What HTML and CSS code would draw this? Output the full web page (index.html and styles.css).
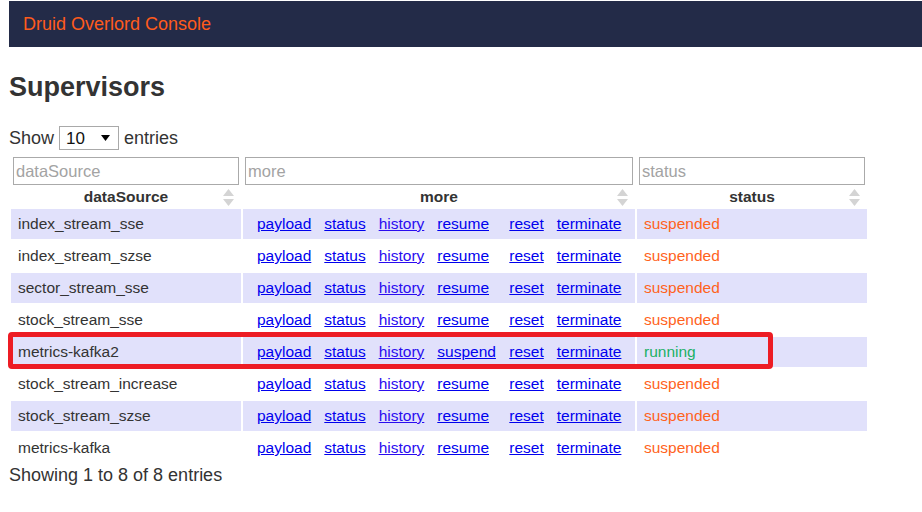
FILE: index.html
```html
<!DOCTYPE html>
<html lang="en">
<head>
<meta charset="utf-8">
<title>Druid Overlord Console</title>
<link rel="stylesheet" href="styles.css">
</head>
<body>
<header class="topbar"><span class="brand">Druid Overlord Console</span></header>
<main class="content">
  <h2 class="page-title">Supervisors</h2>
  <div class="length">
    <span>Show</span>
    <span class="fake-select"><span class="sel-value">10</span><svg class="sel-arrow" width="9" height="6" viewBox="0 0 9 6"><polygon points="0,0 9,0 4.5,6" fill="#000"/></svg></span>
    <span>entries</span>
  </div>
  <div class="table-wrap">
    <table class="grid">
      <colgroup><col class="c1"><col class="c2"><col class="c3"></colgroup>
      <thead>
        <tr class="filters">
          <td><input type="text" placeholder="dataSource"></td>
          <td><input type="text" placeholder="more"></td>
          <td><input type="text" placeholder="status"></td>
        </tr>
        <tr class="heads">
          <th>dataSource<svg class="sort" width="11" height="18" viewBox="0 0 11 18"><polygon points="5.5,0 11,7 0,7" fill="#d4d4d4"/><polygon points="0,10 11,10 5.5,17" fill="#d4d4d4"/></svg></th>
          <th>more<svg class="sort" width="11" height="18" viewBox="0 0 11 18"><polygon points="5.5,0 11,7 0,7" fill="#d4d4d4"/><polygon points="0,10 11,10 5.5,17" fill="#d4d4d4"/></svg></th>
          <th>status<svg class="sort" width="11" height="18" viewBox="0 0 11 18"><polygon points="5.5,0 11,7 0,7" fill="#d4d4d4"/><polygon points="0,10 11,10 5.5,17" fill="#d4d4d4"/></svg></th>
        </tr>
      </thead>
      <tbody>
        <tr class="odd"><td class="ds">index_stream_sse</td><td class="acts"><div class="links"><a href="#">payload</a><a href="#">status</a><a href="#" class="hist">history</a><a href="#" class="slot">resume</a><a href="#">reset</a><a href="#">terminate</a></div></td><td class="st susp">suspended</td></tr>
        <tr><td class="ds">index_stream_szse</td><td class="acts"><div class="links"><a href="#">payload</a><a href="#">status</a><a href="#" class="hist">history</a><a href="#" class="slot">resume</a><a href="#">reset</a><a href="#">terminate</a></div></td><td class="st susp">suspended</td></tr>
        <tr class="odd"><td class="ds">sector_stream_sse</td><td class="acts"><div class="links"><a href="#">payload</a><a href="#">status</a><a href="#" class="hist">history</a><a href="#" class="slot">resume</a><a href="#">reset</a><a href="#">terminate</a></div></td><td class="st susp">suspended</td></tr>
        <tr><td class="ds">stock_stream_sse</td><td class="acts"><div class="links"><a href="#">payload</a><a href="#">status</a><a href="#" class="hist">history</a><a href="#" class="slot">resume</a><a href="#">reset</a><a href="#">terminate</a></div></td><td class="st susp">suspended</td></tr>
        <tr class="odd"><td class="ds">metrics-kafka2</td><td class="acts"><div class="links"><a href="#">payload</a><a href="#">status</a><a href="#" class="hist">history</a><a href="#" class="slot">suspend</a><a href="#">reset</a><a href="#">terminate</a></div></td><td class="st run">running</td></tr>
        <tr><td class="ds">stock_stream_increase</td><td class="acts"><div class="links"><a href="#">payload</a><a href="#">status</a><a href="#" class="hist">history</a><a href="#" class="slot">resume</a><a href="#">reset</a><a href="#">terminate</a></div></td><td class="st susp">suspended</td></tr>
        <tr class="odd"><td class="ds">stock_stream_szse</td><td class="acts"><div class="links"><a href="#">payload</a><a href="#">status</a><a href="#" class="hist">history</a><a href="#" class="slot">resume</a><a href="#">reset</a><a href="#">terminate</a></div></td><td class="st susp">suspended</td></tr>
        <tr><td class="ds">metrics-kafka</td><td class="acts"><div class="links"><a href="#">payload</a><a href="#">status</a><a href="#" class="hist">history</a><a href="#" class="slot">resume</a><a href="#">reset</a><a href="#">terminate</a></div></td><td class="st susp">suspended</td></tr>
      </tbody>
    </table>
    <div class="highlight"></div>
  </div>
  <div class="info">Showing 1 to 8 of 8 entries</div>
</main>
</body>
</html>
```
FILE: styles.css
```css
html, body {
  margin: 0;
  padding: 0;
  background: #fff;
}
body {
  font-family: "Liberation Sans", Arial, sans-serif;
  color: #333;
  padding-top: 1px;
}
.topbar {
  margin-left: 9px;
  height: 46px;
  background: #232b48;
  display: flex;
  align-items: center;
  padding-left: 14px;
}
.brand {
  color: #ff5b1c;
  font-size: 18px;
  line-height: 21px;
}
.content {
  padding-left: 9px;
}
.page-title {
  margin: 25px 0 0;
  font-size: 27px;
  line-height: 31px;
  font-weight: bold;
  color: #333;
}
.length {
  margin-top: 23px;
  height: 24px;
  display: flex;
  align-items: center;
  gap: 5px;
  font-size: 18px;
  line-height: 21px;
  color: #333;
}
.fake-select {
  box-sizing: border-box;
  width: 60px;
  height: 24px;
  border: 1px solid #a9a9a9;
  display: flex;
  align-items: center;
  padding-left: 6px;
  font-size: 17px;
  color: #111;
}
.sel-value {
  flex: 1;
}
.sel-arrow {
  margin-right: 8px;
}
.table-wrap {
  position: relative;
  margin-top: 3px;
  width: 860px;
}
.grid {
  table-layout: fixed;
  width: 860px;
  border-collapse: separate;
  border-spacing: 2px;
  font-size: 15.5px;
}
.c1 { width: 230px; }
.c2 { width: 392px; }
.c3 { width: 230px; }
.grid td, .grid th {
  padding: 0;
}
.filters td {
  padding: 2px 2px 0;
  height: 28px;
}
.filters input {
  box-sizing: border-box;
  width: 100%;
  height: 28px;
  margin: 0;
  border: 1px solid #aaa;
  padding: 0 2px;
  font-family: "Liberation Sans", Arial, sans-serif;
  font-size: 16.5px;
  color: #333;
  outline: none;
}
.filters input::placeholder {
  color: #a3a3a3;
}
.heads th {
  position: relative;
  height: 20px;
  line-height: 18px;
  font-weight: bold;
  color: #333;
  text-align: center;
}
.sort {
  position: absolute;
  right: 7px;
  top: 2px;
}
tbody td {
  height: 30px;
  line-height: 18px;
  white-space: nowrap;
}
tbody tr.odd td {
  background: #e1e1fb;
}
.ds {
  padding-left: 7px !important;
  color: #333;
}
.acts {
  padding-left: 14px !important;
}
.links {
  display: flex;
  gap: 13px;
}
.links a {
  color: #0000ee;
  text-decoration: underline;
}
.links a.hist {
  color: #2a0cf0;
}
.links a.slot {
  min-width: 59px;
}
.st {
  padding-left: 7px !important;
}
.susp { color: #ff631c; }
.run { color: #1ab065; }
.highlight {
  position: absolute;
  left: -1px;
  top: 179px;
  width: 765px;
  height: 37px;
  box-sizing: border-box;
  border: 5px solid #ed1c24;
  border-radius: 4px;
  pointer-events: none;
}
.info {
  font-size: 18px;
  line-height: 21px;
  color: #333;
}
```
